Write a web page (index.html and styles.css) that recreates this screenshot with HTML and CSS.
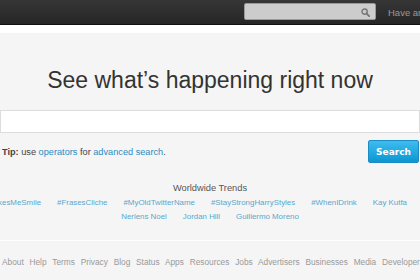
FILE: index.html
```html
<!DOCTYPE html>
<html lang="en">
<head>
    <meta charset="UTF-8">
    <title>Twitter Search</title>
    <link rel="stylesheet" href="styles.css">
</head>
<body>
    <div class="topbar">
        <div class="topbar-inner">
            <form class="top-search">
                <input type="text" name="q">
                <svg class="top-search-icon" width="9" height="9" viewBox="0 0 9 9">
                    <circle cx="3.6" cy="3.6" r="2.6" fill="none" stroke="#777" stroke-width="1.4"/>
                    <line x1="5.5" y1="5.5" x2="8.2" y2="8.2" stroke="#777" stroke-width="1.8" stroke-linecap="round"/>
                </svg>
            </form>
            <span class="signin">Have an account? <a href="#">Sign in</a></span>
        </div>
    </div>
    <div class="page">
        <div class="container">
            <h1>See what’s happening right now</h1>
            <form class="search-form">
                <input type="text" class="search-input" name="q">
                <div class="search-row">
                    <p class="tip"><b>Tip:</b> use <a href="#">operators</a> for <a href="#">advanced search</a>.</p>
                    <button type="submit">Search</button>
                </div>
            </form>
            <div class="trends">
                <h3>Worldwide Trends</h3>
                <ul class="trend-row first">
                    <li><a href="#">#SheMakesMeSmile</a></li>
                    <li><a href="#">#FrasesCliche</a></li>
                    <li><a href="#">#MyOldTwitterName</a></li>
                    <li><a href="#">#StayStrongHarryStyles</a></li>
                    <li><a href="#">#WhenIDrink</a></li>
                    <li><a href="#">Kay Kutfa</a></li>
                </ul>
                <ul class="trend-row">
                    <li><a href="#">Nerlens Noel</a></li>
                    <li><a href="#">Jordan Hill</a></li>
                    <li><a href="#">Guillermo Moreno</a></li>
                </ul>
            </div>
        </div>
        <div class="footer">
            <a href="#">About</a>
            <a href="#">Help</a>
            <a href="#">Terms</a>
            <a href="#">Privacy</a>
            <a href="#">Blog</a>
            <a href="#">Status</a>
            <a href="#">Apps</a>
            <a href="#">Resources</a>
            <a href="#">Jobs</a>
            <a href="#">Advertisers</a>
            <a href="#">Businesses</a>
            <a href="#">Media</a>
            <a href="#">Developers</a>
            <a href="#">Directory</a>
        </div>
    </div>
</body>
</html>
```

FILE: styles.css
```css
body { font-family: "Liberation Sans", Arial, sans-serif; margin: 0; background: #f5f5f5; overflow: hidden; }
a { text-decoration: none; }
.topbar {
    height: 24px;
    background: linear-gradient(#363636, #262626);
    border-bottom: 1px solid #111;
}
.topbar-inner {
    display: flex;
    align-items: center;
    height: 24px;
    padding-left: 244px;
    gap: 12px;
    white-space: nowrap;
}
.top-search { position: relative; margin: 0; }
.top-search input {
    display: block;
    box-sizing: border-box;
    width: 132px;
    height: 17px;
    margin-top: -1px;
    border: 1px solid #999;
    border-radius: 2px;
    background: #cccccc;
    padding: 0 16px 0 4px;
}
.top-search-icon { position: absolute; right: 6px; top: 4px; }
.signin { color: #999; font-size: 9.5px; }
.signin a { color: #999; }
.page { border-top: 8px solid #fff; }
.container { width: 420px; box-sizing: border-box; }
h1 {
    margin: 0;
    padding-top: 33px;
    font-size: 23px;
    font-weight: normal;
    line-height: 28px;
    color: #333;
    text-align: center;
}
.search-form { margin: 0; }
.search-input {
    display: block;
    box-sizing: border-box;
    width: 420px;
    height: 23px;
    margin-top: 16px;
    border: 1px solid #ddd;
    background: #fff;
}
.search-row {
    display: flex;
    justify-content: space-between;
    align-items: center;
    margin-top: 7px;
}
.tip { margin: 0 0 0 2px; font-size: 9.2px; color: #444; }
.tip a { color: #2a8cc1; }
button {
    width: 51px;
    height: 23px;
    margin-right: 1px;
    border: 1px solid #1b8bc4;
    border-radius: 2px;
    background: linear-gradient(#3ebcef, #0b97d3);
    color: #fff;
    font-family: "DejaVu Sans", Verdana, sans-serif;
    font-size: 9px;
    font-weight: bold;
}
.trends { margin-top: 19px; text-align: center; }
.trends h3 { margin: 0; font-size: 9.3px; font-weight: normal; color: #555; line-height: 13px; }
.trend-row {
    display: flex;
    justify-content: center;
    gap: 16px;
    margin: 1px 0 0 0;
    padding: 0;
    list-style: none;
    font-size: 7.9px;
    line-height: 13px;
    white-space: nowrap;
}
.trend-row.first { justify-content: flex-end; padding-right: 13px; }
.trend-row a { color: #5aa7cc; }
.footer {
    margin-top: 17px;
    border-top: 1px solid #fff;
    padding: 16px 0 0 2px;
    font-size: 8.3px;
    line-height: 11px;
    white-space: nowrap;
}
.footer a { color: #999; margin-right: 3.5px; }
```
